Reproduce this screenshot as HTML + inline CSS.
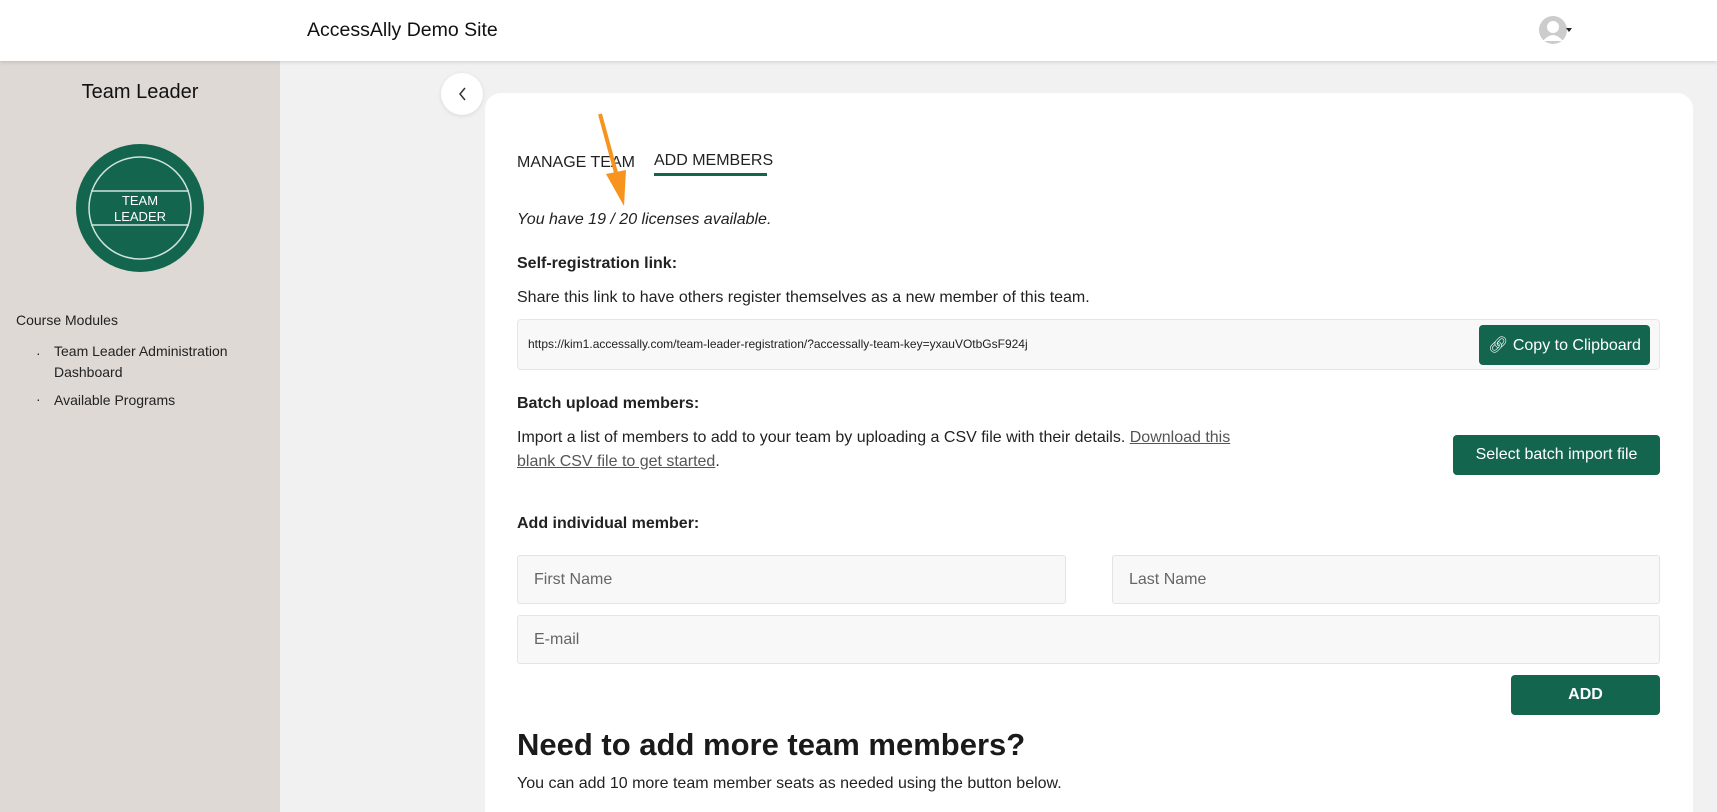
<!DOCTYPE html>
<html><head><meta charset="utf-8"><style>
*{box-sizing:border-box;margin:0;padding:0}
html,body{width:1717px;height:812px;overflow:hidden}
body{background:#f1f1f1;font-family:"Liberation Sans",sans-serif;color:#222;position:relative}
.abs{position:absolute}
.hdr{left:0;top:0;width:1717px;height:61px;background:#fff;box-shadow:0 1px 4px rgba(0,0,0,.15);z-index:2}
.side{left:0;top:61px;width:280px;height:751px;background:#dfd9d5}
.card{left:485px;top:93px;width:1208px;height:719px;background:#fff;border-radius:16px 16px 0 0}
.t{white-space:nowrap}
.btn{background:#13654e;color:#fff;border-radius:4px;display:flex;align-items:center;justify-content:center;font-size:16px}
.inp{background:#f8f8f8;border:1px solid #e4e4e4;border-radius:3px;font-size:16px;color:#666;padding-left:16px;display:flex;align-items:center}
</style></head><body>
<div class="abs hdr">
<div class="abs t" style="left:307px;top:19px;font-size:19.5px;color:#111">AccessAlly Demo Site</div>
<svg class="abs" style="left:1538px;top:15px" width="34" height="32" viewBox="0 0 34 32"><circle cx="15" cy="15" r="14" fill="#ccc"/><circle cx="15" cy="12" r="6" fill="#fff"/><path d="M5 26 Q15 14 25 26 Z" fill="#fff"/><path d="M28 13 l6 0 l-3 4z" fill="#222"/></svg>
</div>
<div class="abs side">
<div class="abs t" style="left:0;width:280px;text-align:center;top:20px;font-size:20px;color:#111">Team Leader</div>
<svg class="abs" style="left:76px;top:83px" width="128" height="128"><circle cx="64" cy="64" r="64" fill="#13654e"/><circle cx="64" cy="64" r="51" fill="none" stroke="#cfe3dc" stroke-width="1.5"/><line x1="15" y1="47" x2="113" y2="47" stroke="#cfe3dc" stroke-width="1.5"/><line x1="15" y1="81" x2="113" y2="81" stroke="#cfe3dc" stroke-width="1.5"/><text x="64" y="61" text-anchor="middle" fill="#fff" font-size="13" font-family="Liberation Sans">TEAM</text><text x="64" y="77" text-anchor="middle" fill="#fff" font-size="13" font-family="Liberation Sans">LEADER</text></svg>
<div class="abs t" style="left:16px;top:251px;font-size:14px">Course Modules</div>
<div class="abs" style="left:36px;top:282px;font-size:14px;line-height:21px">·</div>
<div class="abs" style="left:54px;top:280px;font-size:14px;line-height:21px;width:200px">Team Leader Administration<br>Dashboard</div>
<div class="abs" style="left:36px;top:330px;font-size:14px">·</div>
<div class="abs t" style="left:54px;top:331px;font-size:14px">Available Programs</div>
</div>
<div class="abs" style="left:441px;top:73px;width:42px;height:42px;border-radius:50%;background:#fff;box-shadow:0 1px 4px rgba(0,0,0,.1)"><svg width="42" height="42"><path d="M24 15 L19 21 L24 27" fill="none" stroke="#333" stroke-width="1.5"/></svg></div>
<div class="abs card"></div>
<div class="abs t" style="left:517px;top:154px;font-size:16px">MANAGE TEAM</div>
<div class="abs t" style="left:654px;top:152px;font-size:16px">ADD MEMBERS</div>
<div class="abs" style="left:654px;top:173px;width:113px;height:3px;background:#13654e"></div>
<svg class="abs" style="left:590px;top:110px" width="50" height="100"><path d="M10 4 L28 70" stroke="#f7941d" stroke-width="4" fill="none"/><path d="M16 64 L36 60 L34 96 Z" fill="#f7941d"/></svg>
<div class="abs t" style="left:517px;top:211px;font-size:16px;font-style:italic">You have 19 / 20 licenses available.</div>
<div class="abs t" style="left:517px;top:255px;font-size:16px;font-weight:bold">Self-registration link:</div>
<div class="abs t" style="left:517px;top:289px;font-size:16px">Share this link to have others register themselves as a new member of this team.</div>
<div class="abs" style="left:517px;top:319px;width:1143px;height:51px;background:#f8f8f8;border:1px solid #e6e6e6;border-radius:4px"></div>
<div class="abs t" style="left:528px;top:337px;font-size:12px">https://kim1.accessally.com/team-leader-registration/?accessally-team-key=yxauVOtbGsF924j</div>
<div class="abs btn" style="left:1479px;top:325px;width:171px;height:40px">&#x1F517;&#xFE0E; Copy to Clipboard</div>
<div class="abs t" style="left:517px;top:395px;font-size:16px;font-weight:bold">Batch upload members:</div>
<div class="abs" style="left:517px;top:426px;font-size:16px;line-height:24px;width:750px">Import a list of members to add to your team by uploading a CSV file with their details. <u style="color:#555">Download this blank CSV file to get started</u>.</div>
<div class="abs btn" style="left:1453px;top:435px;width:207px;height:40px">Select batch import file</div>
<div class="abs t" style="left:517px;top:515px;font-size:16px;font-weight:bold">Add individual member:</div>
<div class="abs inp" style="left:517px;top:555px;width:549px;height:49px">First Name</div>
<div class="abs inp" style="left:1112px;top:555px;width:548px;height:49px">Last Name</div>
<div class="abs inp" style="left:517px;top:615px;width:1143px;height:49px">E-mail</div>
<div class="abs btn" style="left:1511px;top:675px;width:149px;height:40px;font-weight:bold">ADD</div>
<div class="abs t" style="left:517px;top:727px;font-size:31px;font-weight:bold;color:#1a1a1a">Need to add more team members?</div>
<div class="abs t" style="left:517px;top:775px;font-size:16px">You can add 10 more team member seats as needed using the button below.</div>
</body></html>
